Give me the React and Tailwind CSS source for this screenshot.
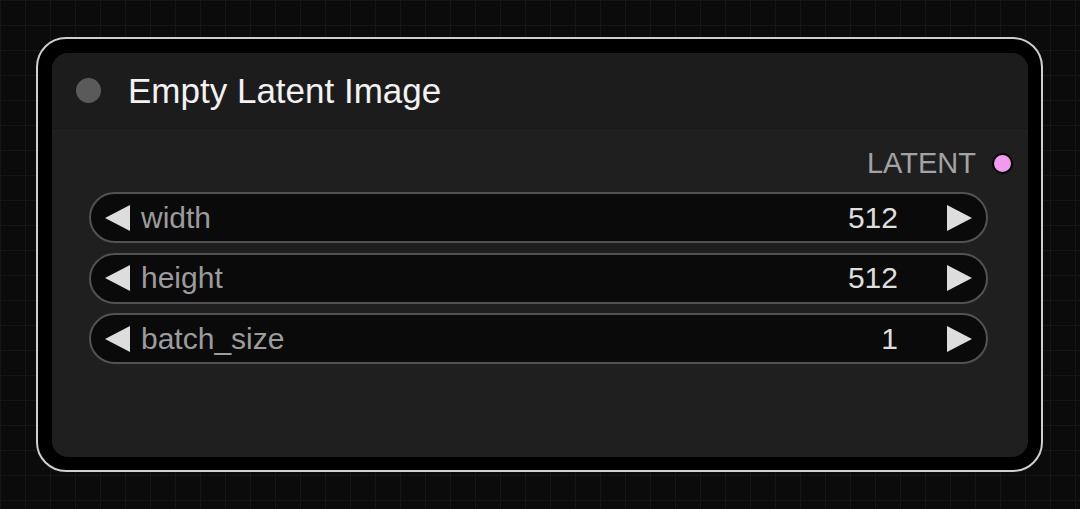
// Canvas node: "Empty Latent Image" with its three number widgets.
const widgets = [
  { name: 'width', value: 512 },
  { name: 'height', value: 512 },
  { name: 'batch_size', value: 1 },
]

function Arrow({ dir }) {
  return (
    <svg width="26" height="26" viewBox="0 0 26 26" className="shrink-0" aria-hidden="true">
      {dir === 'left'
        ? <polygon points="25,0 25,26 0,13" fill="#dddddd" />
        : <polygon points="1,0 1,26 26,13" fill="#dddddd" />}
    </svg>
  )
}

function NumberWidget({ name, value }) {
  return (
    <div className="flex h-[51px] items-center rounded-full border-2 border-[#525252] bg-[#0a0a0a] pl-[14px] pr-[14px]">
      <Arrow dir="left" />
      <span className="ml-[10px] text-[30px] leading-none text-[#9c9c9c]">{name}</span>
      <span className="ml-auto text-[30px] leading-none text-[#dedede]">{value}</span>
      <span className="ml-[48px]"><Arrow dir="right" /></span>
    </div>
  )
}

export default function App() {
  return (
    <div
      className="h-[509px] w-[1080px] overflow-hidden bg-[#0b0b0b] bg-[linear-gradient(to_right,#161616_1px,transparent_1px),linear-gradient(to_bottom,#161616_1px,transparent_1px)] bg-size-[25px_25px] pl-[36px] pt-[37px]"
      style={{ fontFamily: '"Liberation Sans", Arial, sans-serif' }}
    >
      {/* selection outline around the node */}
      <div className="h-[435px] w-[1007px] rounded-[30px] border-2 border-[#cfcfcf] bg-black p-[14px]">
        <div className="flex h-[404px] w-[976px] flex-col overflow-hidden rounded-[16px] bg-[#1f1f1f]">
          <div className="flex h-[76px] shrink-0 items-center border-b border-[#191919] bg-[#1c1c1c] pl-[24px]">
            <span className="h-[25px] w-[25px] rounded-full bg-[#5a5a5a]" />
            <span className="ml-[27px] text-[35px] leading-none text-[#f2f2f2]">Empty Latent Image</span>
          </div>

          <div className="flex flex-col pt-[19px]">
            <div className="flex h-[30px] items-center justify-end pr-[15px]">
              <span className="text-[29px] leading-none text-[#a3a3a3]">LATENT</span>
              <span className="ml-[16px] h-[21px] w-[21px] rounded-full border-2 border-black bg-[#f29af0]" />
            </div>

            <div className="ml-[37px] mr-[40px] mt-[14px] flex flex-col gap-[9.5px]">
              {widgets.map(w => (
                <NumberWidget key={w.name} name={w.name} value={w.value} />
              ))}
            </div>
          </div>
        </div>
      </div>
    </div>
  )
}
